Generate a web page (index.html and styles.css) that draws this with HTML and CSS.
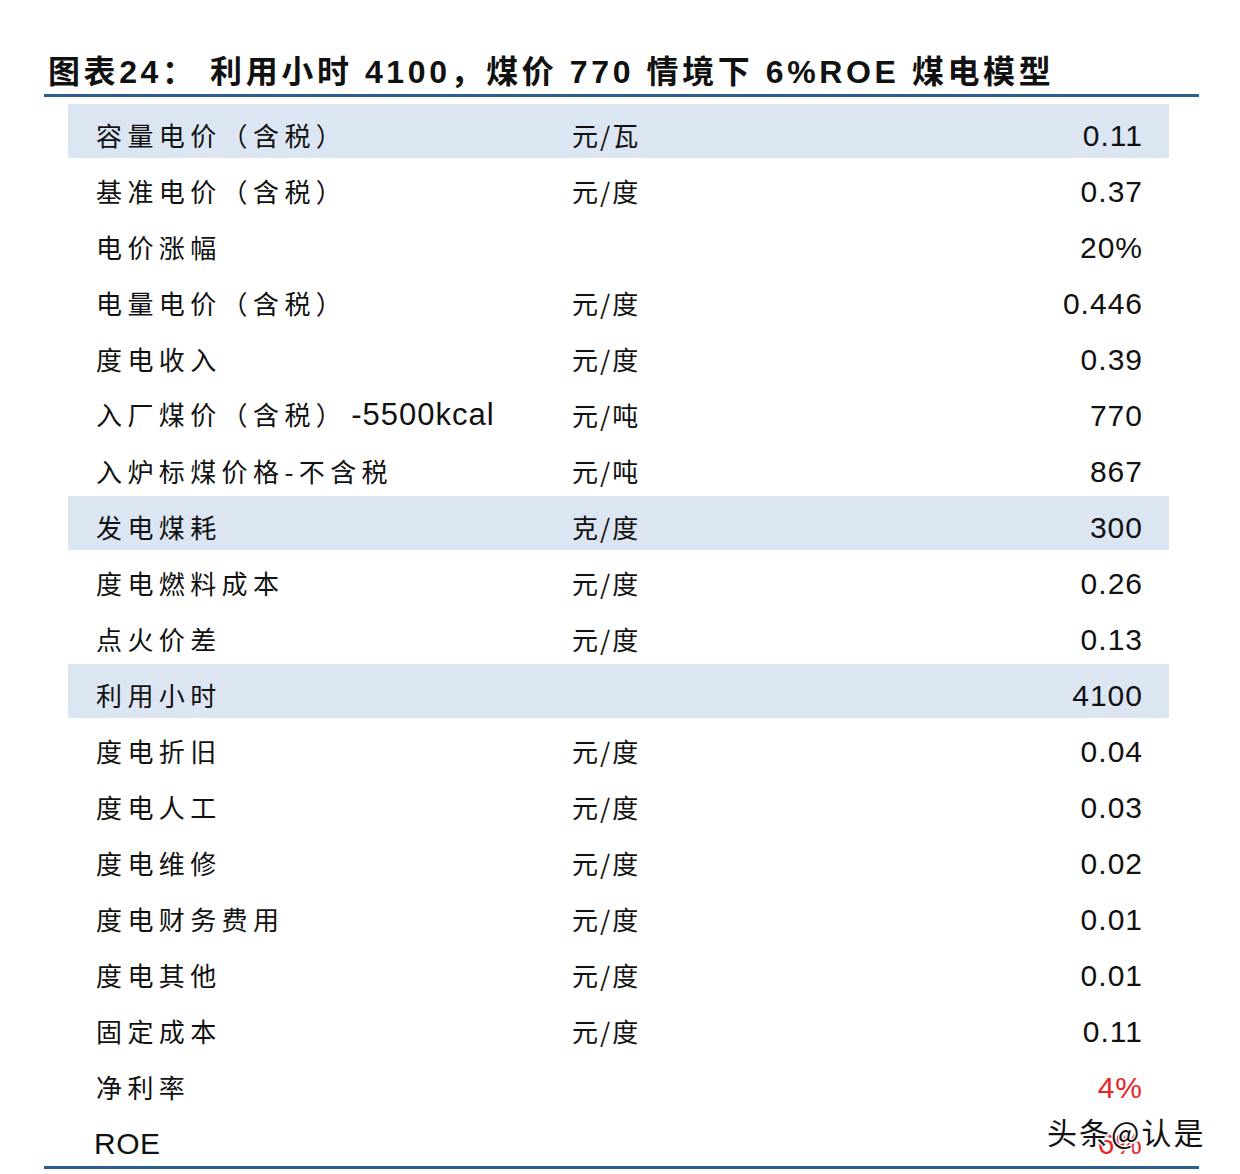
FILE: index.html
```html
<!DOCTYPE html>
<html lang="zh-CN">
<head>
<meta charset="utf-8">
<title>煤电模型</title>
<link rel="stylesheet" href="styles.css">
</head>
<body>
<div class="page">
  <h1 class="title">图表24： 利用小时 4100，煤价 770 情境下 6%ROE 煤电模型</h1>
  <div class="table">
    <div class="row hl"><div class="label">容量电价（含税）</div><div class="unit">元/瓦</div><div class="value">0.11</div></div>
    <div class="row"><div class="label">基准电价（含税）</div><div class="unit">元/度</div><div class="value">0.37</div></div>
    <div class="row"><div class="label">电价涨幅</div><div class="unit"></div><div class="value">20%</div></div>
    <div class="row"><div class="label">电量电价（含税）</div><div class="unit">元/度</div><div class="value">0.446</div></div>
    <div class="row"><div class="label">度电收入</div><div class="unit">元/度</div><div class="value">0.39</div></div>
    <div class="row"><div class="label">入厂煤价（含税）<span class="lat">-5500kcal</span></div><div class="unit">元/吨</div><div class="value">770</div></div>
    <div class="row"><div class="label">入炉标煤价格-不含税</div><div class="unit">元/吨</div><div class="value">867</div></div>
    <div class="row hl"><div class="label">发电煤耗</div><div class="unit">克/度</div><div class="value">300</div></div>
    <div class="row"><div class="label">度电燃料成本</div><div class="unit">元/度</div><div class="value">0.26</div></div>
    <div class="row"><div class="label">点火价差</div><div class="unit">元/度</div><div class="value">0.13</div></div>
    <div class="row hl"><div class="label">利用小时</div><div class="unit"></div><div class="value">4100</div></div>
    <div class="row"><div class="label">度电折旧</div><div class="unit">元/度</div><div class="value">0.04</div></div>
    <div class="row"><div class="label">度电人工</div><div class="unit">元/度</div><div class="value">0.03</div></div>
    <div class="row"><div class="label">度电维修</div><div class="unit">元/度</div><div class="value">0.02</div></div>
    <div class="row"><div class="label">度电财务费用</div><div class="unit">元/度</div><div class="value">0.01</div></div>
    <div class="row"><div class="label">度电其他</div><div class="unit">元/度</div><div class="value">0.01</div></div>
    <div class="row"><div class="label">固定成本</div><div class="unit">元/度</div><div class="value">0.11</div></div>
    <div class="row"><div class="label">净利率</div><div class="unit"></div><div class="value red">4%</div></div>
    <div class="row"><div class="label"><span class="lat roe">ROE</span></div><div class="unit"></div><div class="value red">6%</div></div>
  </div>
  <div class="watermark">头条@认是</div>
</div>
</body>
</html>
```

FILE: styles.css
```css
html, body {
  margin: 0;
  padding: 0;
  background: #ffffff;
}
.page {
  position: relative;
  width: 1240px;
  height: 1174px;
  padding-left: 44px;
  box-sizing: border-box;
}
.title {
  margin: 0;
  width: 1155px;
  padding-top: 50px;
  padding-left: 4px;
  box-sizing: border-box;
  font-family: "Liberation Sans", "Noto Sans CJK SC", sans-serif;
  font-weight: bold;
  font-size: 32px;
  letter-spacing: 3.6px;
  line-height: 44px;
  color: #111111;
  white-space: nowrap;
  border-bottom: 3px solid #2c5d8f;
}
.table {
  width: 1155px;
  padding-top: 7px;
  border-bottom: 3px solid #2c5d8f;
}
.row {
  display: flex;
  align-items: center;
  margin-left: 24px;
  width: 1101px;
  height: 54px;
  margin-bottom: 2px;
  padding: 6px 26px 0 28px;
  box-sizing: border-box;
  color: #111111;
}
.row:last-child {
  margin-bottom: 0;
}
.row.hl {
  background: #dce6f3;
}
.label {
  width: 476px;
  flex: none;
  font-family: "Noto Sans CJK SC", sans-serif;
  font-size: 26px;
  letter-spacing: 5.4px;
  white-space: nowrap;
}
.lat {
  font-family: "Liberation Sans", sans-serif;
  font-size: 31px;
  letter-spacing: 1px;
  margin-left: 4px;
}
.lat.roe {
  margin-left: -2px;
  font-size: 30px;
  letter-spacing: 0.5px;
}
.unit {
  flex: 1;
  font-family: "Noto Sans CJK SC", sans-serif;
  font-size: 26px;
  letter-spacing: 2px;
}
.value {
  font-family: "Liberation Sans", sans-serif;
  font-size: 30px;
  letter-spacing: 1px;
  text-align: right;
  padding-top: 3px;
}
.value.red {
  color: #e8262a;
}
.watermark {
  position: absolute;
  left: 1047px;
  top: 1109px;
  font-family: "Noto Sans CJK SC", sans-serif;
  font-size: 30px;
  letter-spacing: 2px;
  color: #111111;
  text-shadow: 1px 1px 0 #ffffff, -1px -1px 0 #ffffff, 1px -1px 0 #ffffff, -1px 1px 0 #ffffff, 2px 2px 1px rgba(255,255,255,0.8);
}
```
